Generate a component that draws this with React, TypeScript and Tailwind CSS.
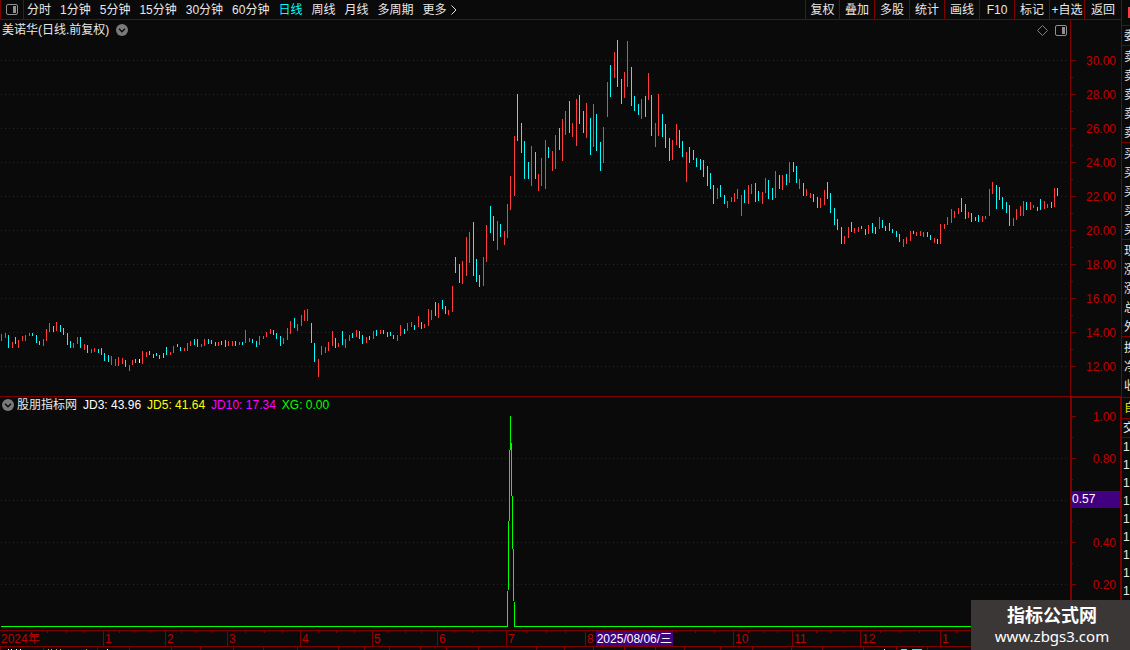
import clsx from "clsx";

// [x, top, bottom] in page pixels
type Bar = [number, number, number];

const PERIODS = [
  "分时",
  "1分钟",
  "5分钟",
  "15分钟",
  "30分钟",
  "60分钟",
  "日线",
  "周线",
  "月线",
  "多周期",
];

const TOOLS = ["复权", "叠加", "多股", "统计", "画线", "F10", "标记", "+自选", "返回"];

const PRICES = [30, 28, 26, 24, 22, 20, 18, 16, 14, 12];

const RISING: Bar[] = [
  [1, 334, 341], [5, 333, 338], [12, 342, 348], [18, 340, 348], [22, 336, 341], [25, 335, 341],
  [29, 333, 336], [43, 339, 346], [46, 329, 341], [49, 323, 332], [56, 322, 331], [73, 343, 348],
  [77, 337, 344], [84, 344, 350], [91, 349, 353], [94, 348, 352], [111, 356, 365], [115, 359, 366],
  [118, 357, 366], [122, 358, 364], [129, 365, 371], [132, 360, 365], [142, 351, 364], [146, 352, 357],
  [170, 352, 355], [173, 346, 353], [184, 348, 351], [187, 343, 351], [190, 341, 346], [201, 344, 347],
  [204, 339, 346], [218, 342, 346], [228, 341, 346], [232, 341, 346], [239, 342, 345], [245, 330, 343],
  [249, 338, 342], [259, 336, 345], [263, 336, 339], [266, 332, 337], [270, 329, 334], [283, 338, 344],
  [287, 328, 340], [290, 321, 334], [297, 324, 331], [301, 315, 326], [304, 310, 321], [307, 309, 321],
  [318, 359, 377], [321, 346, 355], [325, 347, 353], [328, 342, 351], [332, 331, 346], [338, 343, 347],
  [345, 339, 348], [349, 335, 341], [356, 330, 337], [366, 337, 343], [373, 331, 339], [380, 330, 334],
  [397, 335, 341], [400, 325, 336], [407, 323, 331], [411, 322, 327], [418, 316, 327], [424, 324, 328],
  [428, 309, 326], [431, 310, 320], [438, 303, 318], [448, 310, 315], [452, 286, 312], [462, 261, 284],
  [466, 237, 276], [469, 232, 263], [483, 257, 286], [486, 225, 262], [497, 221, 250], [504, 231, 245],
  [507, 204, 238], [510, 176, 210], [514, 136, 196], [531, 146, 186], [538, 174, 191], [541, 158, 186],
  [545, 140, 189], [552, 151, 171], [555, 135, 169], [562, 119, 161], [565, 111, 135], [572, 123, 137],
  [576, 99, 146], [586, 103, 138], [593, 104, 147], [603, 127, 163], [607, 82, 117], [614, 52, 78],
  [624, 72, 98], [627, 41, 87], [641, 99, 119], [648, 73, 100], [655, 123, 147], [658, 94, 136],
  [672, 140, 160], [676, 124, 145], [686, 152, 182], [717, 188, 199], [727, 201, 208], [731, 197, 202],
  [734, 193, 202], [737, 189, 199], [741, 195, 216], [748, 185, 204], [751, 184, 194], [762, 192, 204],
  [765, 178, 193], [775, 171, 198], [782, 175, 190], [789, 162, 183], [799, 179, 189], [806, 189, 196],
  [810, 193, 198], [820, 198, 208], [824, 190, 205], [844, 236, 244], [848, 227, 238], [854, 228, 233],
  [858, 227, 232], [868, 225, 234], [879, 217, 229], [903, 239, 247], [906, 237, 244], [910, 231, 241],
  [916, 232, 236], [920, 231, 236], [923, 232, 237], [934, 238, 243], [940, 224, 244], [944, 224, 229],
  [947, 217, 225], [951, 209, 223], [954, 211, 218], [958, 208, 214], [968, 212, 218], [982, 216, 222],
  [985, 216, 219], [989, 189, 216], [992, 182, 194], [1013, 218, 226], [1016, 209, 220], [1020, 206, 216],
  [1023, 201, 216], [1030, 202, 210], [1033, 205, 208], [1044, 201, 209], [1047, 204, 208], [1054, 188, 207],
];

const FALLING: Bar[] = [
  [8, 335, 348], [15, 337, 344], [32, 333, 336], [36, 335, 343], [39, 341, 345], [53, 326, 332],
  [60, 325, 332], [63, 328, 335], [67, 333, 345], [70, 341, 348], [80, 337, 348], [87, 345, 353],
  [98, 349, 353], [101, 348, 355], [104, 353, 361], [108, 355, 362], [125, 360, 367], [135, 359, 363],
  [149, 351, 355], [153, 354, 358], [156, 353, 356], [159, 355, 359], [163, 353, 358], [166, 347, 355],
  [177, 344, 347], [180, 347, 351], [194, 339, 345], [197, 339, 347], [208, 339, 344], [211, 340, 344],
  [215, 342, 346], [221, 341, 345], [225, 340, 347], [235, 341, 346], [242, 342, 345], [252, 339, 343],
  [256, 341, 347], [273, 330, 335], [276, 333, 339], [280, 336, 346], [294, 318, 328], [311, 323, 343],
  [314, 343, 362], [335, 338, 348], [342, 331, 345], [352, 333, 338], [359, 331, 339], [362, 335, 344],
  [369, 336, 340], [376, 330, 336], [383, 330, 334], [387, 332, 337], [390, 332, 336], [393, 335, 339],
  [404, 329, 334], [414, 325, 330], [421, 322, 329], [435, 302, 316], [442, 300, 309], [445, 306, 314],
  [455, 257, 273], [459, 264, 283], [473, 222, 276], [476, 259, 282], [479, 275, 287], [490, 206, 233],
  [493, 216, 241], [500, 224, 237], [517, 94, 141], [521, 123, 153], [524, 141, 179], [528, 162, 179],
  [535, 152, 179], [548, 147, 158], [559, 128, 150], [569, 101, 133], [579, 95, 124], [583, 111, 133],
  [590, 118, 155], [596, 114, 151], [600, 142, 171], [610, 65, 97], [617, 40, 87], [621, 79, 104],
  [631, 67, 106], [634, 96, 111], [638, 104, 115], [645, 96, 117], [651, 95, 136], [662, 114, 137],
  [665, 124, 148], [669, 138, 161], [679, 130, 148], [682, 141, 157], [689, 147, 163], [693, 150, 160],
  [696, 158, 167], [700, 159, 170], [703, 160, 177], [707, 166, 186], [710, 173, 189], [713, 185, 204],
  [720, 185, 197], [724, 195, 204], [744, 190, 203], [755, 183, 202], [758, 191, 201], [768, 180, 199],
  [772, 188, 200], [779, 175, 189], [786, 174, 185], [793, 162, 172], [796, 166, 183], [803, 183, 196],
  [813, 194, 202], [817, 197, 208], [827, 182, 199], [830, 193, 213], [834, 208, 225], [837, 219, 230],
  [841, 227, 244], [851, 222, 232], [861, 226, 229], [865, 229, 235], [872, 223, 233], [875, 227, 234],
  [882, 220, 228], [885, 226, 231], [889, 223, 231], [892, 229, 233], [896, 231, 237], [899, 234, 242],
  [913, 231, 234], [927, 232, 237], [930, 235, 240], [937, 239, 244], [961, 198, 212], [965, 204, 219],
  [971, 213, 222], [975, 217, 221], [978, 215, 222], [996, 185, 209], [999, 187, 200], [1002, 197, 209],
  [1006, 202, 213], [1009, 205, 226], [1026, 202, 210], [1037, 207, 211], [1040, 199, 210], [1051, 202, 208],
  [1057, 188, 196],
];

const FLAT: Bar[] = [[139, 359, 363]];

const AXIS_WIDTH = 1121;

const MONTHS = [
  { label: "2024年", start: 0, end: 103 },
  { label: "1", start: 103, end: 165 },
  { label: "2", start: 165, end: 227 },
  { label: "3", start: 227, end: 300 },
  { label: "4", start: 300, end: 372 },
  { label: "5", start: 372, end: 437 },
  { label: "6", start: 437, end: 506 },
  { label: "7", start: 506, end: 585 },
  { label: "8", start: 585, end: 733, cursor: "2025/08/06/三" },
  { label: "10", start: 733, end: 792 },
  { label: "11", start: 792, end: 860 },
  { label: "12", start: 860, end: 940 },
  { label: "1", start: 940, end: 1121 },
];

const WEEK_TICKS = [
  47, 66, 84, 119, 134, 150, 181, 196, 212, 245, 264, 282, 318, 336, 354, 388, 405, 421, 454, 472,
  489, 526, 546, 565, 676, 695, 714, 748, 763, 777, 816, 830, 843, 880, 900, 919, 956,
];

const FOOTER_TICKS = [
  0, 43, 97, 129, 171, 200, 233, 263, 297, 338, 364, 389, 420, 446, 478, 536, 564, 593, 624, 655,
  684, 720, 752, 791, 822, 863, 896, 927,
];

const INDICATORS = [
  { text: "JD3: 43.96", color: "text-white" },
  { text: "JD5: 41.64", color: "text-[#ffff00]" },
  { text: "JD10: 17.34", color: "text-[#ff00ff]" },
  { text: "XG: 0.00", color: "text-[#00ff00]" },
];

// Quote panel groups, only their first column is in view
const QUOTE_GROUPS = [
  { rows: ["卖", "卖", "卖", "卖", "卖"], height: "h-[97px]" },
  { rows: ["买", "买", "买", "买", "买"], height: "h-[97px]" },
  { rows: ["现", "涨", "涨", "总", "外"], height: "h-[97px]" },
  { rows: ["换", "净", "收"], height: "h-[61px]" },
];

const Bars: React.FC<{ bars: Bar[]; fill: string }> = ({ bars, fill }) => (
  <g fill={fill}>
    {bars.map(([x, top, bottom]) => (
      <rect key={x} x={x} y={top} width="1" height={bottom - top} />
    ))}
  </g>
);

const GridLines: React.FC<{ rows: number[] }> = ({ rows }) => (
  <g stroke="#800000" strokeDasharray="1 3">
    {rows.map((y) => (
      <line key={y} x1="1" x2="1067" y1={y + 0.5} y2={y + 0.5} />
    ))}
  </g>
);

const PanelIcon: React.FC = () => (
  <svg width="12" height="11" viewBox="0 0 12 11" fill="none" aria-hidden="true">
    <rect x="0.5" y="0.5" width="11" height="10" rx="1.5" stroke="#909090" />
    <rect x="7" y="2" width="3" height="7" fill="#909090" />
  </svg>
);

const CollapseButton: React.FC<{ label: string }> = ({ label }) => (
  <button type="button" aria-label={label} className="shrink-0">
    <svg width="12" height="12" viewBox="0 0 12 12" aria-hidden="true">
      <circle cx="6" cy="6" r="6" fill="#7a7a7a" />
      <path d="M3 4.8 6 7.8 9 4.8" fill="none" stroke="#0a0a0a" strokeWidth="1.4" />
    </svg>
  </button>
);

const Toolbar: React.FC = () => (
  <header className="flex h-5 shrink-0 border-b border-l border-[#800000]">
    <button
      type="button"
      aria-label="侧栏"
      className="flex w-[23px] shrink-0 items-center justify-center border-r border-[#800000] pr-px pb-px"
    >
      <PanelIcon />
    </button>
    <nav className="flex flex-1 items-center gap-[9px] pl-[3px]">
      {PERIODS.map((period) => (
        <button
          key={period}
          type="button"
          className={clsx("shrink-0", period === "日线" && "text-[#00ffff]")}
        >
          {period}
        </button>
      ))}
      <button type="button" className="flex shrink-0 items-center gap-1">
        更多
        <svg width="6" height="10" viewBox="0 0 6 10" fill="none" aria-hidden="true">
          <path d="M0.5 0.5 5 5 0.5 9.5" stroke="#e0e0e0" />
        </svg>
      </button>
    </nav>
    <div className="flex shrink-0">
      {TOOLS.map((tool) => (
        <button
          key={tool}
          type="button"
          className="w-[35px] border-l border-[#800000] text-center whitespace-nowrap first:w-[34px] last:w-[37px]"
        >
          {tool}
        </button>
      ))}
    </div>
  </header>
);

const PricePane: React.FC = () => (
  <section className="flex shrink-0">
    <div className="flex min-w-0 flex-1 flex-col">
      <div className="flex h-5 items-center gap-[7px] pr-[3px] pl-[2px]">
        <h1>美诺华(日线.前复权)</h1>
        <CollapseButton label="收起主图" />
        <div className="ml-auto flex items-center gap-[7px]">
          <svg width="11" height="11" viewBox="0 0 11 11" fill="none" aria-hidden="true">
            <path d="M5.5 0.5 10.5 5.5 5.5 10.5 0.5 5.5Z" stroke="#808080" />
          </svg>
          <PanelIcon />
        </div>
      </div>
      <svg
        className="h-[356px] w-full"
        viewBox="0 40 1070 356"
        preserveAspectRatio="none"
        shapeRendering="crispEdges"
        role="img"
        aria-label="日线走势"
      >
        <GridLines rows={PRICES.map((_, i) => 60 + i * 34)} />
        <Bars bars={RISING} fill="#ff3c3c" />
        <Bars bars={FALLING} fill="#00ffff" />
        <Bars bars={FLAT} fill="#ffffff" />
      </svg>
    </div>
    <div className="flex w-[51px] shrink-0 border-l border-[#800000]">
      <svg width="5" height="376" viewBox="0 20 5 376" fill="#800000" aria-hidden="true">
        {PRICES.map((price, i) => (
          <g key={price}>
            <rect x="0" y={60 + i * 34} width="5" height="1" />
            {i < PRICES.length - 1 && <rect x="0" y={77 + i * 34} width="2" height="1" />}
          </g>
        ))}
      </svg>
      <div className="flex-1 pt-6 pr-[5px] text-right text-[#c00000]">
        {PRICES.map((price) => (
          <div key={price} className="h-[34px] leading-[34px]">
            {price.toFixed(2)}
          </div>
        ))}
      </div>
    </div>
  </section>
);

const IndicatorPane: React.FC = () => (
  <section className="flex shrink-0 border-t border-[#800000]">
    <div className="flex min-w-0 flex-1 flex-col">
      <div className="flex h-4 items-center pl-[2px]">
        <CollapseButton label="收起副图" />
        <h2 className="ml-[3px]">股朋指标网</h2>
        {INDICATORS.map(({ text, color }) => (
          <span key={text} className={clsx("ml-[6px]", color)}>
            {text}
          </span>
        ))}
      </div>
      <svg
        className="h-[217px] w-full"
        viewBox="0 413 1070 217"
        preserveAspectRatio="none"
        shapeRendering="crispEdges"
        role="img"
        aria-label="XG"
      >
        <GridLines rows={[458, 500, 542, 584]} />
        <path
          d="M1 626.5H507.5L510.5 416L514.5 626.5H1070"
          fill="none"
          stroke="#00ff00"
          strokeLinejoin="bevel"
        />
      </svg>
    </div>
    <div className="flex w-[51px] shrink-0 border-t border-r border-l-2 border-[#800000]">
      <svg width="4" height="232" viewBox="0 398 4 232" fill="#800000" aria-hidden="true">
        {[416, 458, 500, 542, 584].map((y) => (
          <g key={y}>
            <rect x="0" y={y} width="4" height="1" />
            <rect x="0" y={y + 21} width="1" height="1" />
          </g>
        ))}
      </svg>
      <div className="-ml-1 flex-1 text-right leading-[42px] text-[#c00000]">
        <div className="-mt-[2px] h-[42px] pr-1">1.00</div>
        <div className="h-[42px] pr-1">0.80</div>
        <div className="flex h-[42px] items-center pb-1">
          <div className="h-[17px] w-full border-y border-[#600040] bg-[#400080] text-left leading-[15px] text-white">
            0.57
          </div>
        </div>
        <div className="h-[42px] pr-1">0.40</div>
        <div className="h-[42px] pr-1">0.20</div>
      </div>
    </div>
  </section>
);

const TimeAxis: React.FC = () => (
  <div className="flex h-[17px] shrink-0 border-y border-[#800000] text-[#c00000]">
    <div className="relative flex w-full">
      {MONTHS.map(({ label, start, end, cursor }) => (
        <div
          key={start}
          className={clsx(
            "flex shrink-0 gap-[2px] pl-px leading-[17px]",
            start > 0 && "border-l border-[#800000]",
          )}
          style={{ width: `${((end - start) / AXIS_WIDTH) * 100}%` }}
        >
          {label}
          {cursor && (
            <span className="h-[15px] bg-[#400080] px-px whitespace-nowrap text-white">{cursor}</span>
          )}
        </div>
      ))}
      <svg
        className="absolute inset-x-0 top-0 h-[2px] w-full"
        viewBox={`0 0 ${AXIS_WIDTH} 2`}
        preserveAspectRatio="none"
        fill="#800000"
        aria-hidden="true"
      >
        {WEEK_TICKS.map((x) => (
          <rect key={x} x={x} y="0" width="1" height="2" />
        ))}
      </svg>
    </div>
  </div>
);

const FooterEdge: React.FC = () => (
  <svg
    className="h-[3px] w-full shrink-0"
    viewBox={`0 0 ${AXIS_WIDTH} 3`}
    preserveAspectRatio="none"
    shapeRendering="crispEdges"
    aria-hidden="true"
  >
    <g fill="#800000">
      {FOOTER_TICKS.map((x) => (
        <rect key={x} x={x} y="0" width="1" height="3" />
      ))}
    </g>
    <path d="M8 2.5h1m2 0h1m4 0h1m3 0h1M107 2.5h1M884 2.5h1" stroke="#ffffff" />
    <path d="M48 2.5h1m2 0h1m4 0h1m3 0h1M86 2.5h1" stroke="#c0c000" />
    <path d="M901 2.5h6m5 0h10" stroke="#00ffff" />
  </svg>
);

const QuoteStrip: React.FC = () => (
  <aside className="w-[9px] shrink-0 overflow-hidden border-l border-[#800000]">
    <div className="flex h-[25px] items-center justify-end">
      <div className="h-[11px] w-[2px] bg-[#ff3c3c]" />
    </div>
    <div className="h-5 border-t border-[#800000] pl-[2px] leading-5">委</div>
    {QUOTE_GROUPS.map(({ rows, height }, i) => (
      <div key={i} className={clsx("border-t border-[#800000] pt-px pl-[2px] leading-5", height)}>
        {rows.map((row, j) => (
          <div key={j} className="h-[19px]">
            {row}
          </div>
        ))}
      </div>
    ))}
    <div className="h-[21px] border-t border-[#800000] pl-[2px] leading-5 text-[#e0e000]">自</div>
    <div className="h-[19px] border-t border-[#800000] pl-px leading-[19px]">交</div>
    <div className="border-t border-[#800000] pl-px">
      {Array.from({ length: 9 }, (_, i) => (
        <div key={i} className="h-[18px] leading-[18px]">
          1
        </div>
      ))}
    </div>
  </aside>
);

const App: React.FC = () => {
  return (
    <div className="relative flex min-h-screen w-full overflow-hidden bg-[#0a0a0a] font-['Liberation_Sans','Noto_Sans_CJK_SC',sans-serif] text-[12px] leading-4 text-[#e8e8e8]">
      <main className="flex min-w-0 flex-1 flex-col">
        <Toolbar />
        <PricePane />
        <IndicatorPane />
        <TimeAxis />
        <FooterEdge />
      </main>
      <QuoteStrip />

      {/* Site badge over the bottom right corner */}
      <div className="absolute right-0 bottom-0 flex h-[50px] w-[159px] flex-col items-center bg-[#3c3737] pt-[6px] pl-[3px] text-white">
        <strong className="text-[18px] leading-5 font-bold">指标公式网</strong>
        <a href="#" className="font-['Noto_Sans',sans-serif] text-[15px] leading-5">
          www.zbgs3.com
        </a>
      </div>
    </div>
  );
};

export default App;
